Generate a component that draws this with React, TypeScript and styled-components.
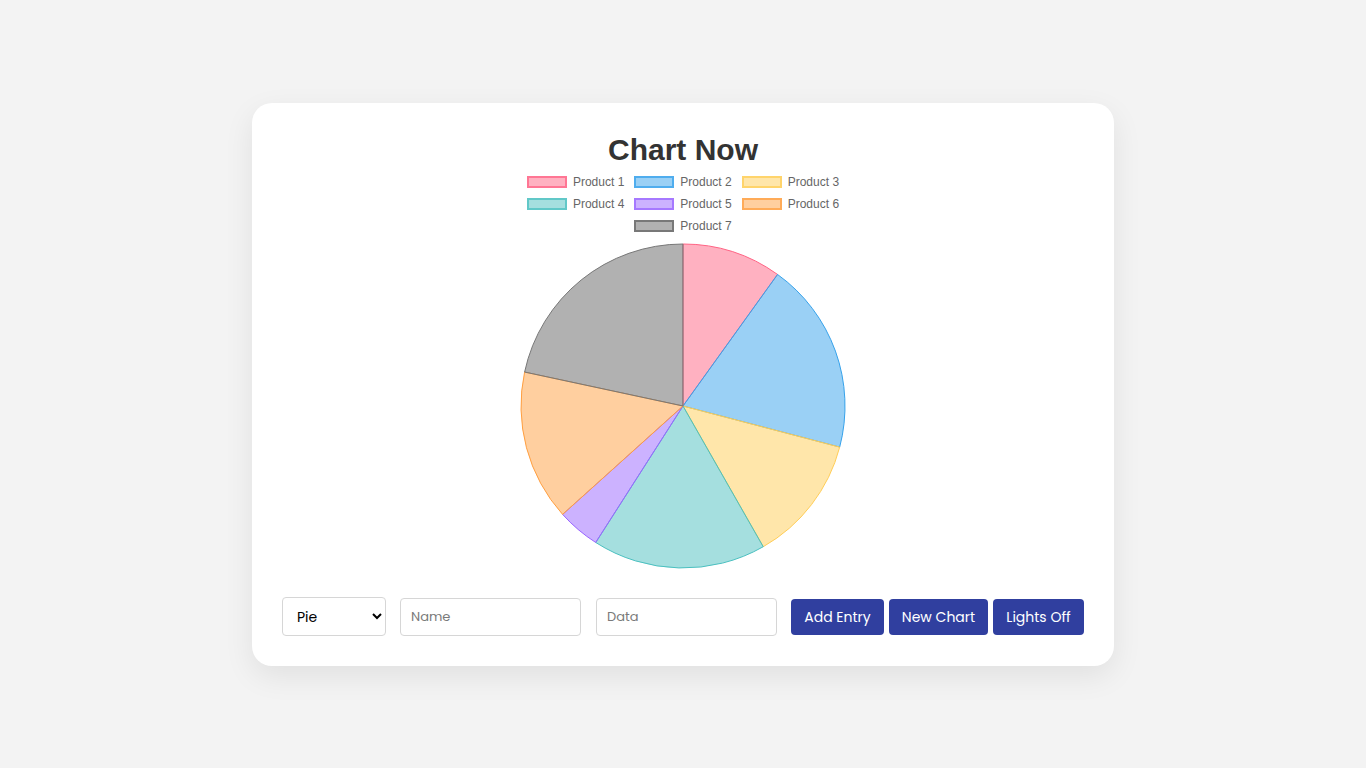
import React, { useState } from 'react'
import styled, { createGlobalStyle } from 'styled-components'

const GlobalStyle = createGlobalStyle`
  html, body {
    margin: 0;
    padding: 0;
    background: #f3f3f3;
  }
  body {
    font-family: 'Poppins', 'Open Sans', sans-serif;
  }
`

type Slice = { label: string; value: number; rgb: string; border?: string }

// values as degrees of the circle
const slices: Slice[] = [
  { label: 'Product 1', value: 35.7, rgb: '255, 99, 132' },
  { label: 'Product 2', value: 69, rgb: '54, 162, 235' },
  { label: 'Product 3', value: 45.6, rgb: '255, 205, 86' },
  { label: 'Product 4', value: 62.3, rgb: '75, 192, 192' },
  { label: 'Product 5', value: 15.4, rgb: '153, 102, 255' },
  { label: 'Product 6', value: 54.1, rgb: '255, 159, 64' },
  { label: 'Product 7', value: 77.9, rgb: '99, 99, 99', border: 'rgb(120, 120, 120)' },
]

const R = 162
const C = 164

const point = (deg: number) => {
  const a = ((deg - 90) * Math.PI) / 180
  return [C + R * Math.cos(a), C + R * Math.sin(a)]
}

const PieChart = ({ data }: { data: Slice[] }) => {
  const total = data.reduce((s, d) => s + d.value, 0)
  let start = 0
  return (
    <svg width={C * 2} height={C * 2} viewBox={`0 0 ${C * 2} ${C * 2}`}>
      {data.map((d) => {
        const sweep = (d.value / total) * 360
        const [x1, y1] = point(start)
        const [x2, y2] = point(start + sweep)
        const large = sweep > 180 ? 1 : 0
        start += sweep
        return (
          <path
            key={d.label}
            d={`M${C},${C} L${x1},${y1} A${R},${R} 0 ${large} 1 ${x2},${y2} Z`}
            fill={`rgba(${d.rgb}, 0.5)`}
            stroke={d.border || `rgb(${d.rgb})`}
            strokeWidth={1}
            strokeLinejoin="round"
          />
        )
      })}
    </svg>
  )
}

export default function App() {
  const [type, setType] = useState('pie')
  return (
    <>
      <GlobalStyle />
      <Page>
        <Card>
          <ChartArea>
            <Title>Chart Now</Title>
            <Legend>
              {slices.map((s) => (
                <LegendItem key={s.label}>
                  <Swatch $rgb={s.rgb} $border={s.border} />
                  <span>{s.label}</span>
                </LegendItem>
              ))}
            </Legend>
            <PieWrap>
              <PieChart data={slices} />
            </PieWrap>
          </ChartArea>
          <Controls>
            <Select value={type} onChange={(e) => setType(e.target.value)}>
              <option value="pie">Pie</option>
              <option value="bar">Bar</option>
              <option value="line">Line</option>
              <option value="doughnut">Doughnut</option>
            </Select>
            <Input placeholder="Name" />
            <Input placeholder="Data" />
            <Buttons>
              <Button $w={93}>Add Entry</Button>
              <Button $w={99}>New Chart</Button>
              <Button $w={91}>Lights Off</Button>
            </Buttons>
          </Controls>
        </Card>
      </Page>
    </>
  )
}

const Page = styled.div`
  min-height: 100vh;
  display: flex;
  align-items: center;
  justify-content: center;
`

const Card = styled.div`
  width: 862px;
  height: 563px;
  box-sizing: border-box;
  background: #fff;
  border-radius: 20px;
  box-shadow: 0 10px 30px rgba(0, 0, 0, 0.08);
  padding: 30px 30px 29px;
  display: flex;
  flex-direction: column;
`

const ChartArea = styled.div`
  display: flex;
  flex-direction: column;
  align-items: center;
  flex: 1;
`

const Title = styled.div`
  font-family: 'Liberation Sans', Arial, sans-serif;
  font-weight: 700;
  font-size: 30px;
  line-height: 34px;
  color: #333;
`

const Legend = styled.div`
  display: flex;
  flex-wrap: wrap;
  justify-content: center;
  width: 330px;
  margin-top: 4px;
`

const LegendItem = styled.div`
  display: flex;
  align-items: center;
  height: 22px;
  padding: 0 5px;
  font-family: 'Liberation Sans', Arial, sans-serif;
  font-size: 12px;
  color: #666;
  span {
    margin-left: 6px;
  }
`

const Swatch = styled.div<{ $rgb: string; $border?: string }>`
  width: 40px;
  height: 12px;
  box-sizing: border-box;
  background: rgba(${(p) => p.$rgb}, 0.5);
  border: 2px solid ${(p) => p.$border || `rgba(${p.$rgb}, 0.75)`};
`

const PieWrap = styled.div`
  margin-top: 5px;
  display: flex;
`

const Controls = styled.div`
  display: flex;
  align-items: center;
  height: 39px;
`

const fieldBase = `
  box-sizing: border-box;
  height: 38px;
  border: 1px solid #d6d6d6;
  border-radius: 4px;
  font-family: 'Poppins', 'Open Sans', sans-serif;
  font-size: 13px;
  background: #fff;
  outline: none;
`

const Select = styled.select`
  ${fieldBase}
  height: 39px;
  margin-top: -1px;
  width: 104px;
  padding: 0 6px 0 10px;
  color: #000;
  font-size: 14px;
`

const Input = styled.input`
  ${fieldBase}
  width: 181px;
  margin-left: 14px;
  padding: 0 10px;
  color: #333;
  &::placeholder {
    color: #7a7a7a;
  }
  & + & {
    margin-left: 15px;
  }
`

const Buttons = styled.div`
  display: flex;
  gap: 5px;
  margin-left: 14px;
`

const Button = styled.button<{ $w: number }>`
  width: ${(p) => p.$w}px;
  height: 36px;
  border: none;
  border-radius: 4px;
  background: #303f9f;
  color: #fff;
  font-family: 'Poppins', 'Open Sans', sans-serif;
  font-size: 14px;
  font-weight: 400;
  cursor: pointer;
  padding: 0;
`
